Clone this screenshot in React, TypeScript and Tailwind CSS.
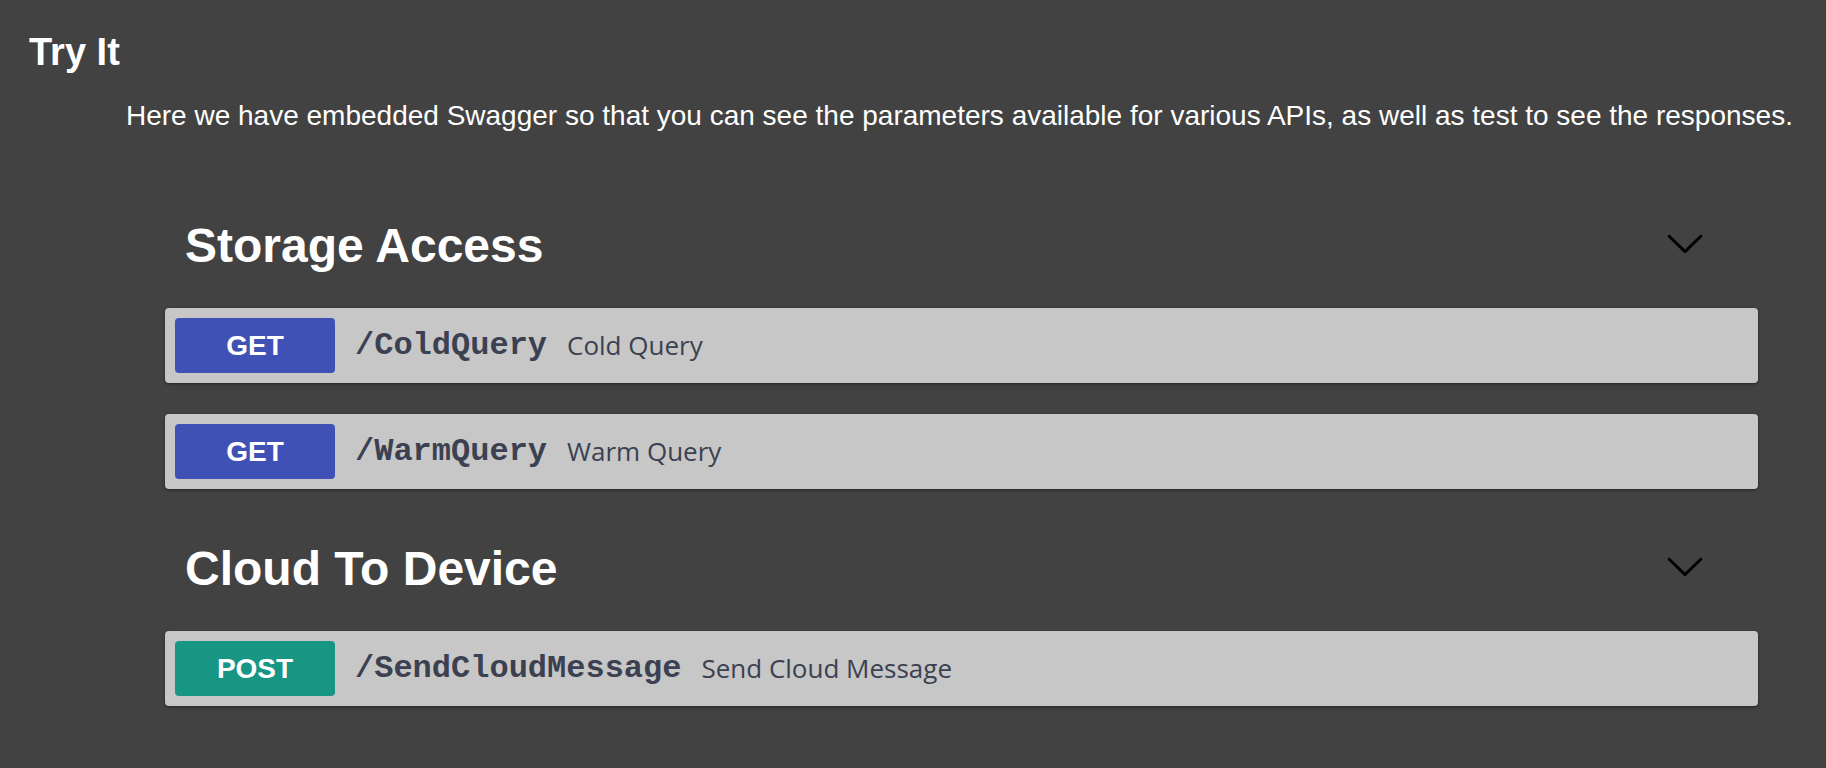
const sections = [
  {
    title: 'Storage Access',
    ops: [
      { method: 'GET', path: '/ColdQuery', summary: 'Cold Query' },
      { method: 'GET', path: '/WarmQuery', summary: 'Warm Query' },
    ],
  },
  {
    title: 'Cloud To Device',
    ops: [{ method: 'POST', path: '/SendCloudMessage', summary: 'Send Cloud Message' }],
  },
];

function Chevron() {
  return (
    <svg width="40" height="40" viewBox="0 0 20 20" className="mt-[21px] fill-black">
      <path d="M17.418 6.109c.272-.268.709-.268.979 0s.271.701 0 .969l-7.908 7.83c-.27.268-.707.268-.979 0l-7.908-7.83c-.27-.268-.27-.701 0-.969.271-.268.709-.268.979 0L10 13.25l7.418-7.141z" />
    </svg>
  );
}

export default function App() {
  return (
    <div className="min-h-screen bg-[#424242] pb-[40px] font-['Liberation_Sans',Arial,sans-serif] text-white">
      <h2 className="pl-[29px] pt-[29px] text-[38px] font-bold leading-[46px]">Try It</h2>
      <p className="mt-[25px] whitespace-nowrap pl-[126px] text-[28px] leading-[32px]">
        Here we have embedded Swagger so that you can see the parameters available for various APIs, as well as test to see the responses.
      </p>

      <div className="mt-[70px] ml-[165px] mr-[68px] flex flex-col gap-[36px]">
        {sections.map((s) => (
          <section key={s.title}>
            <div className="flex h-[96px] items-start justify-between border-b border-[#3b4151]/30 pl-[20px] pr-[53px]">
              <h3 className="mt-[20px] text-[48px] font-bold leading-[48px]">{s.title}</h3>
              <Chevron />
            </div>
            <div className="mt-[10px] flex flex-col gap-[31px]">
              {s.ops.map((op) => (
                <div
                  key={op.path}
                  className="flex h-[75px] items-center rounded-[4px] bg-[#c7c7c7] p-[10px] shadow-[0_1px_3px_rgba(0,0,0,0.45)]"
                >
                  <span
                    className={`flex h-[55px] w-[160px] items-center justify-center rounded-[4px] text-[28px] font-bold text-white ${
                      op.method === 'GET' ? 'bg-[#3f51b5]' : 'bg-[#179683]'
                    }`}
                  >
                    {op.method}
                  </span>
                  <span className="ml-[20px] font-['Liberation_Mono','Courier_New',monospace] text-[32px] font-bold text-[#3b4151]">
                    {op.path}
                  </span>
                  <span className="ml-[20px] font-['Open_Sans',sans-serif] text-[26px] text-[#3b4151]">
                    {op.summary}
                  </span>
                </div>
              ))}
            </div>
          </section>
        ))}
      </div>
    </div>
  );
}
